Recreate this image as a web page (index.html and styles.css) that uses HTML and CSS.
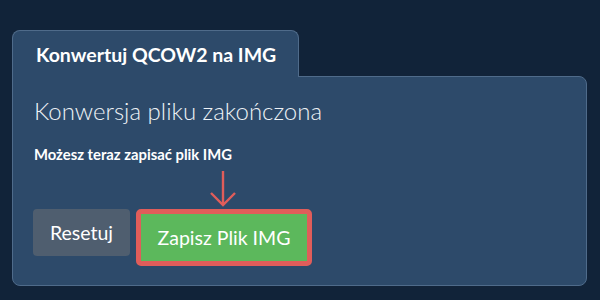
FILE: index.html
```html
<!DOCTYPE html>
<html>
    <head>
        <meta name="viewport" content="width=device-width, initial-scale=1.0">
        <link rel="stylesheet" href="styles.css">
    </head>
    <body>
        <div class="wrap">
            <div class="tab">Konwertuj QCOW2 na IMG</div>
            <div class="panel">
                <p class="heading">Konwersja pliku zakończona</p>
                <p class="info">Możesz teraz zapisać plik IMG</p>
                <div class="actions">
                    <button class="btn reset">Resetuj</button>
                    <div class="highlight">
                        <svg class="arrow" width="30" height="38" viewBox="0 0 30 38">
                            <path d="M15 1 L15 35 M3 23 L15 35 L27 23" fill="none" stroke="#e05d5a" stroke-width="2.4"/>
                        </svg>
                        <button class="btn save">Zapisz Plik IMG</button>
                    </div>
                </div>
            </div>
        </div>
    </body>
</html>
```

FILE: styles.css
```css
body {
    margin: 0;
    background: #112339;
    font-family: Lato, "Noto Sans", sans-serif;
    color: #fff;
}

.wrap {
    padding: 30px 0 0 12px;
    width: 575px;
}

.tab {
    width: 287px;
    height: 47px;
    box-sizing: border-box;
    background: #2d4a6a;
    border: 1px solid #4f6b8a;
    border-bottom: none;
    border-radius: 8px 8px 0 0;
    padding: 12px 0 0 23px;
    font-size: 19.5px;
    font-weight: bold;
    position: relative;
    z-index: 1;
    margin-bottom: -1px;
}

.panel {
    height: 210px;
    box-sizing: border-box;
    background: #2d4a6a;
    border: 1px solid #4f6b8a;
    border-radius: 0 8px 8px 8px;
    padding: 19px 20px 0 20px;
}

.heading {
    margin: 0 0 0 1px;
    font-size: 24px;
    font-weight: 300;
    color: #eef2f6;
}

.info {
    margin: 20px 0 0 1px;
    font-size: 14.8px;
    font-weight: bold;
}

.actions {
    display: flex;
    align-items: flex-start;
    gap: 6px;
    margin-top: 46px;
}

.btn {
    font-family: Lato, "Noto Sans", sans-serif;
    font-size: 19.5px;
    color: #fff;
    border: none;
    border-radius: 4px;
    height: 47px;
}

.reset {
    width: 97px;
    background: #4f5e6f;
}

.highlight {
    position: relative;
    border: 5px solid #e05d5a;
    border-radius: 5px;
    display: flex;
}

.save {
    width: 166px;
    background: #5cb85c;
    border-radius: 0;
}

.arrow {
    position: absolute;
    left: 67px;
    top: -44px;
}
```
